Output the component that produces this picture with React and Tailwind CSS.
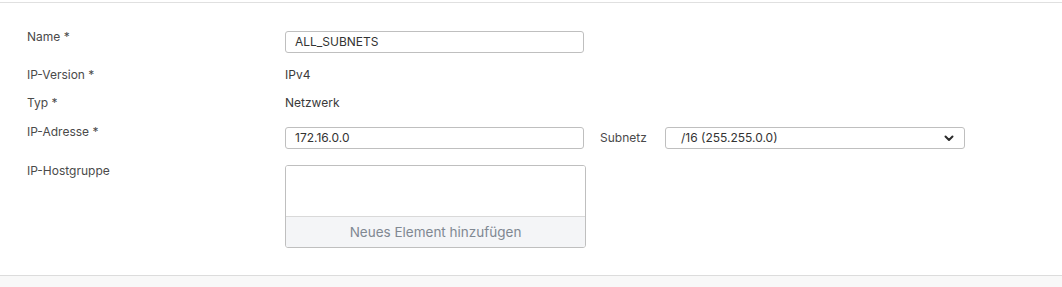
export default function App() {
  return (
    <div className="w-[1062px] h-[287px] bg-white flex flex-col text-[12px] text-[#3d3d3d]" style={{ fontFamily: "Inter, 'Noto Sans', sans-serif" }}>
      <div className="mt-[2px] border-t border-[#e0e0e0] flex-1 flex flex-col pl-[27px] pt-[28px]">
        {/* Name */}
        <div className="flex items-start h-[22px]">
          <div className="w-[258px] leading-4 -mt-[2px] text-[#4a4a4a]">Name *</div>
          <div className="w-[299px] h-[22px] border border-[#bfbfbf] rounded-[3px] pl-[9px] flex items-center text-[#333]">ALL_SUBNETS</div>
        </div>
        {/* IP-Version */}
        <div className="flex items-start h-4 mt-[14px]">
          <div className="w-[258px] leading-4 text-[#4a4a4a]">IP-Version *</div>
          <div className="leading-4 text-[#3a3a3a]">IPv4</div>
        </div>
        {/* Typ */}
        <div className="flex items-start h-4 mt-[12px]">
          <div className="w-[258px] leading-4 text-[#4a4a4a]">Typ *</div>
          <div className="leading-4 text-[#3a3a3a]">Netzwerk</div>
        </div>
        {/* IP-Adresse */}
        <div className="flex items-start h-[22px] mt-[16px]">
          <div className="w-[258px] leading-4 -mt-[3px] text-[#4a4a4a]">IP-Adresse *</div>
          <div className="w-[299px] h-[22px] border border-[#bfbfbf] rounded-[3px] pl-[9px] flex items-center text-[#333]">172.16.0.0</div>
          <div className="ml-[16px] w-[65px] h-[22px] flex items-center text-[#4a4a4a]">Subnetz</div>
          <div className="w-[300px] h-[22px] border border-[#bfbfbf] rounded-[3px] pl-[15px] pr-[10px] flex items-center justify-between text-[#333]">
            <span>/16 (255.255.0.0)</span>
            <svg width="10" height="7" viewBox="0 0 10 7" fill="none">
              <path d="M1.5 1.5 L5 5 L8.5 1.5" stroke="#2b2b2b" strokeWidth="2" strokeLinecap="round" strokeLinejoin="round" />
            </svg>
          </div>
        </div>
        {/* IP-Hostgruppe */}
        <div className="flex items-start mt-[16px]">
          <div className="w-[258px] leading-4 -mt-[2px] text-[#4a4a4a]">IP-Hostgruppe</div>
          <div className="w-[301px] h-[83px] border border-[#bfbfbf] rounded-[3px] flex flex-col overflow-hidden">
            <div className="flex-1 bg-white"></div>
            <div className="h-[31px] border-t border-[#d9d9d9] bg-[#f4f5f7] flex items-center justify-center text-[13.5px] text-[#808892]">Neues Element hinzufügen</div>
          </div>
        </div>
        <div className="flex-1"></div>
      </div>
      <div className="h-[12px] border-t border-[#dcdcdc] bg-[#f8f8f8]"></div>
    </div>
  );
}
